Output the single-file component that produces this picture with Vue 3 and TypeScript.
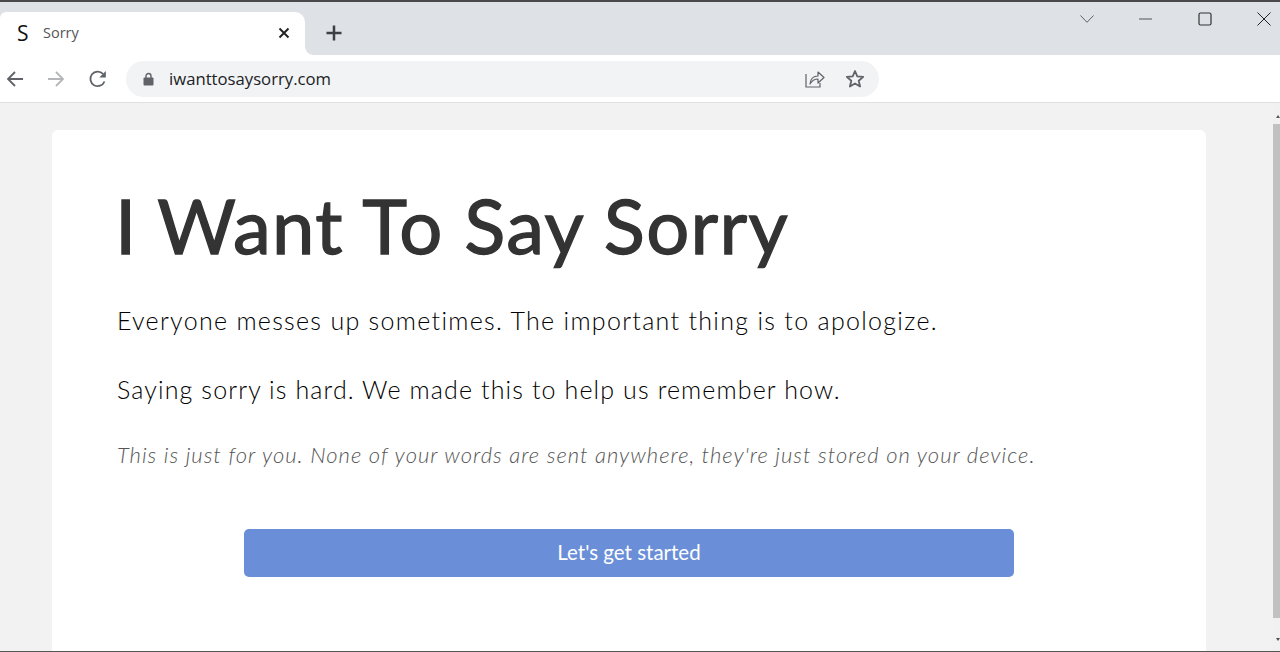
<script setup lang="ts">
const site = 'iwanttosaysorry.com'
</script>

<template>
  <div class="window">
    <div class="strip">
      <div class="tab">
        <span class="favicon">S</span>
        <span class="tab-title">Sorry</span>
        <svg class="tab-close" width="12" height="12" viewBox="0 0 12 12"><path d="M1.5 1.5l9 9M10.500 1.500l-9 9" stroke="#222" stroke-width="1.900" fill="none"/></svg>
      </div>
      <svg class="new-tab" width="18" height="18" viewBox="0 0 18 18"><path d="M9 1.500v15M1.500 9h15" stroke="#3c4043" stroke-width="2.500" fill="none"/></svg>
      <div class="win-controls">
        <svg class="ctl chevron" width="14" height="8" viewBox="0 0 14 8"><path d="M.5.5L7 7.300 13.500.5" stroke="#5f6368" fill="none"/></svg>
        <svg class="ctl minimize" width="14" height="2" viewBox="0 0 14 2"><path d="M0 1h13" stroke="#555" fill="none"/></svg>
        <svg class="ctl maximize" width="14" height="14" viewBox="0 0 14 14"><rect x="1" y="1" width="12" height="12" rx="1.500" stroke="#333" fill="none" stroke-width="1.200"/></svg>
        <svg class="ctl closer" width="14" height="14" viewBox="0 0 14 14"><path d="M.5.5l13 13M13.500.5l-13 13" stroke="#222" fill="none"/></svg>
      </div>
    </div>
    <div class="toolbar">
      <svg class="nav" width="18" height="16" viewBox="0 0 18 16"><path d="M17 8H2M9 1L2 8l7 7" stroke="#5f6368" stroke-width="1.800" fill="none"/></svg>
      <svg class="nav" width="18" height="16" viewBox="0 0 18 16"><path d="M1 8h15M9 1l7 7-7 7" stroke="#b4b6b9" stroke-width="1.800" fill="none"/></svg>
      <svg class="nav" width="20" height="20" viewBox="0 0 20 20"><path d="M16.500 12.500A7.300 7.300 0 1 1 15 4.800" stroke="#5f6368" stroke-width="1.800" fill="none"/><path d="M17.800 2v6.500h-6.500z" fill="#5f6368"/></svg>
      <div class="omnibox">
        <svg class="lock" width="11" height="14" viewBox="0 0 11 14"><path d="M3 6V4a2.500 2.500 0 0 1 5 0v2" stroke="#5f6368" stroke-width="1.400" fill="none"/><rect x="0.500" y="5.500" width="10" height="8" rx="1" fill="#5f6368"/></svg>
        <span class="url">{{ site }}</span>
        <svg class="share" width="20" height="19" viewBox="0 0 20 19"><path d="M1 5v13h14v-4" stroke="#5f6368" stroke-width="1.200" fill="none"/><path d="M5 15c.5-5 3.500-8 8-8V3l6 5.500-6 5.500v-4c-3.500 0-6 1.500-8 5z" stroke="#5f6368" stroke-width="1.200" fill="none" stroke-linejoin="round"/></svg>
        <svg class="star" width="20" height="19" viewBox="0 0 20 19"><path d="M10 2l2.300 5.400 5.900.5-4.500 3.900 1.400 5.700-5.100-3-5.100 3 1.400-5.700L1.800 7.900l5.900-.5z" stroke="#5f6368" stroke-width="1.800" fill="none" stroke-linejoin="round"/></svg>
      </div>
    </div>
    <div class="viewport">
      <main class="card">
        <h1>I Want To Say Sorry</h1>
        <p class="lead first">Everyone messes up sometimes. The important thing is to apologize.</p>
        <p class="lead second">Saying sorry is hard. We made this to help us remember how.</p>
        <p class="note">This is just for you. None of your words are sent anywhere, they're just stored on your device.</p>
        <button class="start" type="button">Let's get started</button>
      </main>
      <div class="scrollbar">
        <span class="arrow up"></span>
        <span class="thumb"></span>
        <span class="arrow down"></span>
      </div>
    </div>
  </div>
</template>

<style>
html, body { margin: 0; height: 100%; overflow: hidden; }
</style>

<style scoped>
.window {
  width: 1280px;
  height: 652px;
  display: flex;
  flex-direction: column;
  overflow: hidden;
  box-sizing: border-box;
  border-top: 2px solid #4a4a4c;
  border-bottom: 1px solid #555;
  font-family: "Lato", "Noto Sans", sans-serif;
  background: #f2f2f2;
}
.strip {
  height: 53px;
  flex: none;
  background: #dee1e6;
  display: flex;
  align-items: flex-end;
}
.tab {
  width: 305px;
  height: 43px;
  box-sizing: border-box;
  background: #fff;
  border-radius: 6px 10px 0 0;
  display: flex;
  align-items: center;
  padding: 0 15px 2px 17px;
  position: relative;
}
.tab::after {
  content: "";
  position: absolute;
  left: 100%;
  bottom: 0;
  width: 8px;
  height: 8px;
  background: radial-gradient(circle at 100% 0, #dee1e6 7.500px, #fff 8px);
}
.favicon { font: 21px "Open Sans", sans-serif; color: #111; width: 26px; }
.tab-title { font: 14.500px "Open Sans", sans-serif; color: #555; flex: 1; }
.new-tab { margin: 0 0 13px 20px; }
.win-controls {
  margin-left: auto;
  align-self: flex-start;
  display: flex;
  align-items: center;
  height: 34px;
  padding-right: 9px;
}
.chevron { margin-right: 45px; }
.minimize { margin-right: 45px; }
.maximize { margin-right: 45px; }
.toolbar {
  height: 47px;
  flex: none;
  background: #fff;
  border-bottom: 1px solid #e0e0e0;
  display: flex;
  align-items: center;
  padding-left: 6px;
}
.nav { margin-right: 23px; }
.nav:nth-child(3) { margin-right: 18px; }
.omnibox {
  width: 753px;
  height: 36px;
  background: #f1f3f4;
  border-radius: 18px;
  display: flex;
  align-items: center;
  padding: 0 14px 0 17px;
  box-sizing: border-box;
}
.lock { margin-right: 15px; }
.url { font: 16.700px "Open Sans", sans-serif; color: #202124; flex: 1; }
.share { margin-right: 21px; position: relative; left: 1px; }
.viewport {
  flex: 1;
  min-height: 0;
  display: flex;
  padding-left: 52px;
  padding-top: 27px;
  position: relative;
}
.card {
  width: 1154px;
  height: 600px;
  flex: none;
  box-sizing: border-box;
  background: #fff;
  border-radius: 6px 6px 0 0;
  padding: 49px 65px 0;
  display: flex;
  flex-direction: column;
}
h1 {
  margin: 0 0 0 -2px;
  font-size: 76px;
  line-height: 92px;
  font-weight: 400;
  letter-spacing: 1.300px;
  color: #333;
  -webkit-text-stroke: 1.300px #333;
}
.lead {
  margin: 0;
  font-size: 25px;
  line-height: 30px;
  font-weight: 300;
  color: #000;
}
.first { margin-top: 34px; letter-spacing: 1.305px; }
.second { margin-top: 39px; letter-spacing: 1.130px; }
.note {
  margin: 37px 0 0;
  font-size: 22px;
  line-height: 28px;
  font-style: italic;
  font-weight: 300;
  letter-spacing: 1.010px;
  color: #555;
}
.start {
  margin: 60px 0 0 127px;
  width: 770px;
  height: 48px;
  flex: none;
  border: 0;
  border-radius: 5px;
  background: #6a8fd8;
  color: #fff;
  padding-bottom: 3px;
  font: 400 20.500px "Lato", sans-serif;
}
.scrollbar {
  position: absolute;
  right: 0;
  top: 0;
  bottom: 0;
  width: 7px;
  background: #f1f1f1;
}
.thumb {
  position: absolute;
  left: 0;
  right: 0;
  top: 21px;
  height: 494px;
  background: #c1c1c1;
}
.arrow {
  position: absolute;
  right: 0;
  width: 0;
  height: 0;
  border-left: 2.500px solid transparent;
  border-right: 2.500px solid transparent;
}
.arrow.up { top: 12px; border-bottom: 3px solid #555; }
.arrow.down { bottom: 10px; border-top: 3px solid #505050; }
</style>
